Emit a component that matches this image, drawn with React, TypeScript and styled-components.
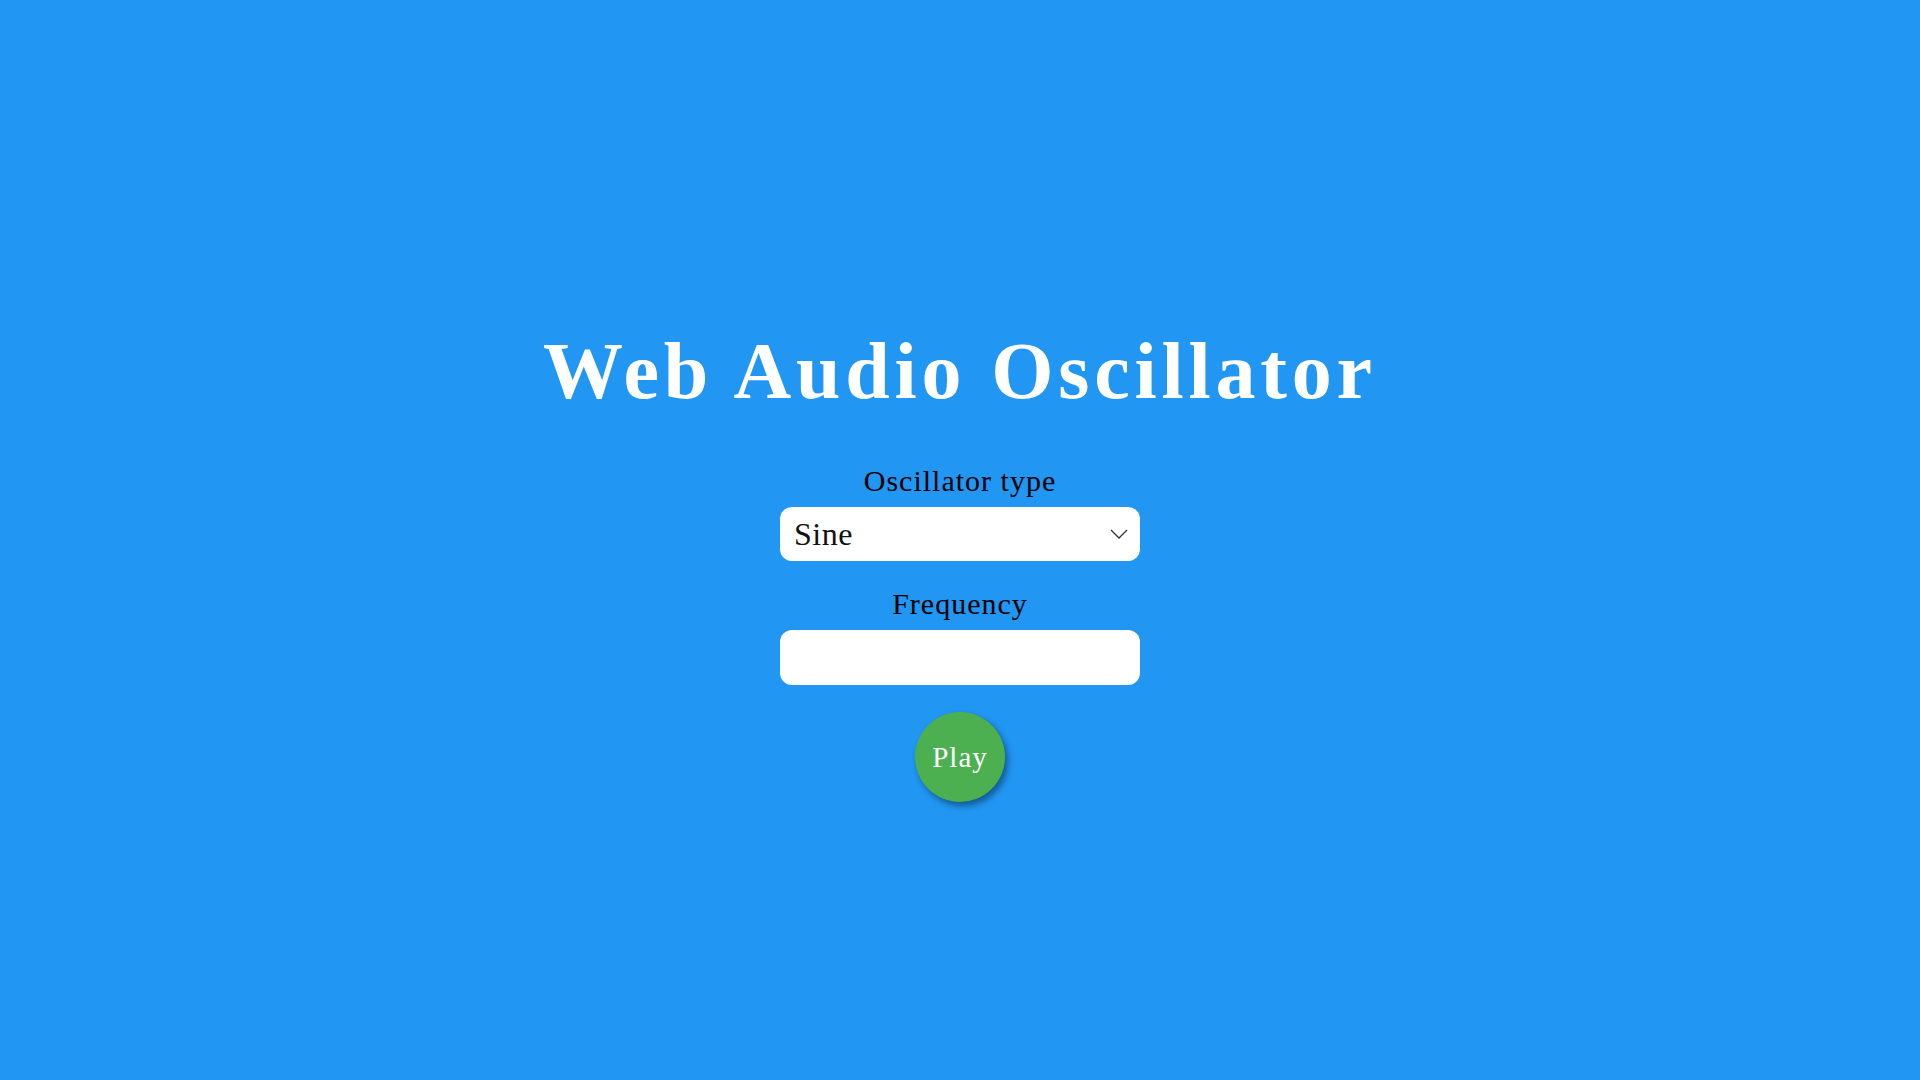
import React, { useState } from "react";
import styled, { createGlobalStyle } from "styled-components";

const GlobalStyle = createGlobalStyle`
  html, body {
    margin: 0;
    padding: 0;
    background: #2196f3;
  }
  body {
    font-family: Georgia, "Liberation Serif", "DejaVu Serif", serif;
  }
`;

const Page = styled.main`
  width: 100%;
  height: 1080px;
  background: #2196f3;
  display: flex;
  flex-direction: column;
  align-items: center;
  padding-top: 321px;
  box-sizing: border-box;
`;

const Title = styled.h1`
  margin: 0 0 42px;
  color: #ffffff;
  font-family: "Liberation Serif", serif;
  font-weight: 700;
  font-size: 80px;
  line-height: 100px;
  letter-spacing: 4.8px;
`;

const Field = styled.label`
  display: flex;
  flex-direction: column;
  align-items: center;
  gap: 8px;
  margin-bottom: 25px;
`;

const LabelText = styled.span`
  color: #000000;
  font-family: "Liberation Serif", serif;
  font-size: 30px;
  line-height: 36px;
  letter-spacing: 1px;
`;

const SelectWrap = styled.div`
  position: relative;
  width: 360px;
  height: 54px;
`;

const Select = styled.select`
  appearance: none;
  width: 100%;
  height: 100%;
  border: none;
  border-radius: 12px;
  background: #ffffff;
  padding: 0 40px 0 14px;
  font-family: "Liberation Serif", serif;
  font-size: 32px;
  letter-spacing: 0.5px;
  color: #111111;
  outline: none;
`;

const Chevron = styled.svg`
  position: absolute;
  right: 12px;
  top: 50%;
  transform: translateY(-50%);
  pointer-events: none;
`;

const Input = styled.input`
  width: 360px;
  height: 55px;
  box-sizing: border-box;
  border: none;
  border-radius: 12px;
  background: #ffffff;
  padding: 0 14px;
  font-family: "Liberation Serif", serif;
  font-size: 32px;
  outline: none;
`;

const PlayButton = styled.button`
  width: 90px;
  height: 90px;
  border-radius: 50%;
  border: none;
  background: #4caf50;
  color: #ffffff;
  font-family: "Liberation Serif", serif;
  font-size: 29px;
  letter-spacing: 1px;
  box-shadow: 3px 4px 6px rgba(0, 0, 0, 0.4);
  cursor: pointer;
  margin-top: 2px;
`;

export default function App() {
  const [type, setType] = useState("sine");
  const [freq, setFreq] = useState("");
  return (
    <>
      <GlobalStyle />
      <Page>
        <Title>Web Audio Oscillator</Title>
        <Field>
          <LabelText>Oscillator type</LabelText>
          <SelectWrap>
            <Select value={type} onChange={(e) => setType(e.target.value)}>
              <option value="sine">Sine</option>
              <option value="square">Square</option>
              <option value="sawtooth">Sawtooth</option>
              <option value="triangle">Triangle</option>
            </Select>
            <Chevron width="18" height="10" viewBox="0 0 18 10">
              <path d="M1 1 L9 9 L17 1" fill="none" stroke="#333" strokeWidth="1.3" />
            </Chevron>
          </SelectWrap>
        </Field>
        <Field>
          <LabelText>Frequency</LabelText>
          <Input type="text" value={freq} onChange={(e) => setFreq(e.target.value)} />
        </Field>
        <PlayButton>Play</PlayButton>
      </Page>
    </>
  );
}
